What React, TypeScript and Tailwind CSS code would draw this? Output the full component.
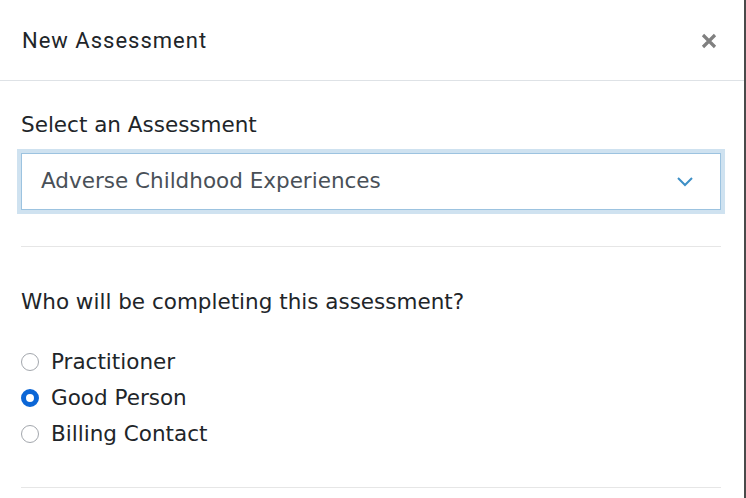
import React from "react";

const body = { fontFamily: '"DejaVu Sans", "Noto Sans", sans-serif' };

function Radio({ checked, label }: { checked?: boolean; label: string }) {
  return (
    <label className="flex items-center h-[36px] gap-[12px] cursor-pointer">
      {checked ? (
        <span className="w-[18px] h-[18px] rounded-full border-[5px] border-[#0b66d6] bg-white box-border shrink-0" />
      ) : (
        <span className="w-[18px] h-[18px] rounded-full border border-[#a3a7ad] bg-white box-border shrink-0" />
      )}
      <span className="text-[21.5px] text-[#212529] leading-none">{label}</span>
    </label>
  );
}

export default function App() {
  return (
    <div className="w-[746px] h-[498px] bg-white overflow-hidden border-r-2 border-[#4a4a4a] box-border" style={body}>
      <div className="h-[81px] flex items-center justify-between pl-[22px] pr-[26px] border-b border-[#dee2e6]">
        <h1
          className="text-[22px] tracking-[1px] text-[#212529] font-normal"
          style={{ fontFamily: 'Roboto, "Liberation Sans", Arial, sans-serif' }}
        >
          New Assessment
        </h1>
        <svg width="18" height="18" viewBox="0 0 18 18" className="mt-[1px] ml-[1px]">
          <path d="M3 3 L15 15 M15 3 L3 15" stroke="#808080" strokeWidth="3.2" strokeLinecap="butt" />
        </svg>
      </div>
      <div className="pl-[21px] pr-[23px]">
        <div className="pt-[29px] text-[21.5px] text-[#212529] leading-[30px]">Select an Assessment</div>
        <div className="mt-[13px] h-[57px] border border-[#9cc3e0] shadow-[0_0_0_4px_#cfe2f0] flex items-center justify-between pl-[19px] pr-[26px]">
          <span className="text-[21.5px] text-[#495057]">Adverse Childhood Experiences</span>
          <svg width="18" height="12" viewBox="0 0 18 12">
            <path d="M2 2 L9 9 L16 2" stroke="#3d8fc6" strokeWidth="2" fill="none" />
          </svg>
        </div>
        <div className="mt-[36px] border-t border-[#e6e6e6]" />
        <div className="pt-[40px] text-[21.5px] text-[#212529] leading-[30px]">Who will be completing this assessment?</div>
        <div className="mt-[27px] flex flex-col">
          <Radio label="Practitioner" />
          <Radio checked label="Good Person" />
          <Radio label="Billing Contact" />
        </div>
        <div className="mt-[35px] border-t border-[#e6e6e6]" />
      </div>
    </div>
  );
}
